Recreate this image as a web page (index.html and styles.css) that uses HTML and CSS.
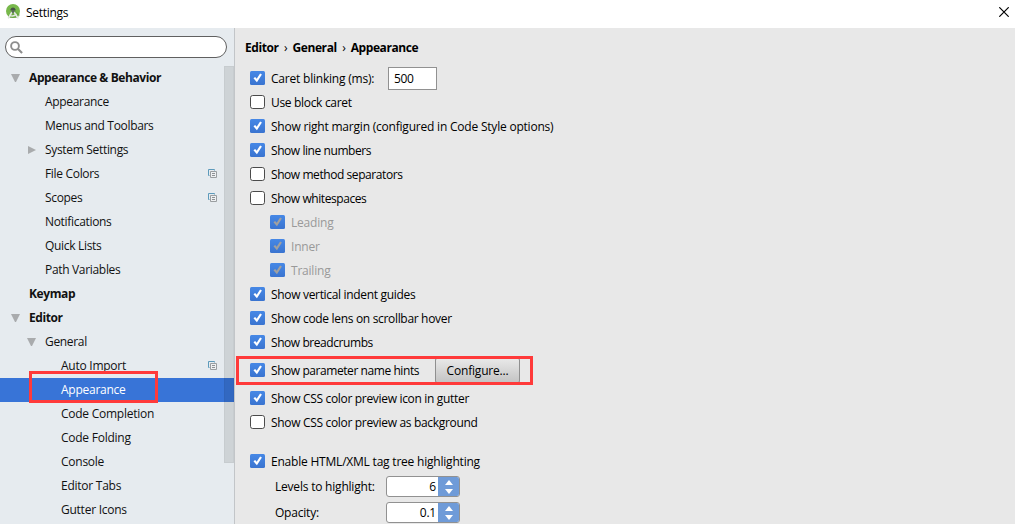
FILE: index.html
```html
<!DOCTYPE html>
<html lang="en">
<head>
    <meta charset="UTF-8">
    <meta name="viewport" content="width=device-width, initial-scale=1.0">
    <title>Settings</title>
    <link rel="stylesheet" href="styles.css">
</head>
<body>
    <!-- shared icons -->
    <svg class="defs" width="0" height="0">
        <linearGradient id="blue" x1="0" y1="0" x2="0" y2="1">
            <stop offset="0" stop-color="#4688e6"/>
            <stop offset="1" stop-color="#3a74d0"/>
        </linearGradient>
        <symbol id="copy" viewBox="0 0 9 9">
            <path d="M1.5 6.5h-1v-6h6v1" fill="none" stroke="#5d9abb"/>
            <path d="M2.5 2.5h6v6h-6z" fill="#eef0f2" stroke="#9a9ea1"/>
            <path d="M4 4.5h3M4 6.5h3" stroke="#8d9194"/>
        </symbol>
        <symbol id="on" viewBox="0 0 15 14">
            <rect width="15" height="14" rx="1.5" fill="url(#blue)"/>
            <path d="M4.3 6.6l2.5 2.9 4.2-6.5" fill="none" stroke="currentColor" stroke-width="2.2"/>
        </symbol>
        <symbol id="off" viewBox="0 0 15 14">
            <rect x=".5" y=".5" width="14" height="13" rx="2.2" fill="#fff" stroke="#4b4b4b"/>
        </symbol>
    </svg>

    <div class="titlebar">
        <svg class="logo" width="15" height="16" viewBox="0 0 15 16">
            <circle cx="7" cy="7" r="7" fill="#78b84b"/>
            <path d="M7 5l7 6-3 3H3L2 12z" fill="#609b3c" opacity=".6"/>
            <path d="M4.5 5.5a2.6 2.6 0 0 1 5 0v1h-5z" fill="#455247"/>
            <path d="M6 8L2.2 14.5M8 8l4.3 6.5" stroke="#e4e9e2" stroke-width="1.6"/>
            <path d="M3.5 11q3.5 2.5 7-1" fill="none" stroke="#e4e9e2" stroke-width="1.3"/>
            <circle cx="7" cy="7.6" r="1.4" fill="#59665a"/>
        </svg>
        <span class="title">Settings</span>
        <svg class="close" width="10" height="10" viewBox="0 0 10 10">
            <path d="M.3.3l9.4 9.4M9.7.3L.3 9.7" stroke="#000" stroke-width="1.2"/>
        </svg>
    </div>

    <div class="window">
        <div class="sidebar">
            <div class="search">
                <svg width="13" height="13" viewBox="0 0 13 13">
                    <circle cx="5" cy="5" r="3.9" fill="none" stroke="#8d8d8d" stroke-width="1.9"/>
                    <path d="M7.8 7.8l4.3 4.3" stroke="#8d8d8d" stroke-width="2.1"/>
                </svg>
            </div>
            <div class="tree">
                <div class="node top"><i class="arrow down"></i><span>Appearance &amp; Behavior</span></div>
                <div class="node second"><span>Appearance</span></div>
                <div class="node second"><span>Menus and Toolbars</span></div>
                <div class="node second"><i class="arrow right"></i><span>System Settings</span></div>
                <div class="node second"><span>File Colors</span><svg class="copy" width="9" height="9"><use href="#copy"/></svg></div>
                <div class="node second"><span>Scopes</span><svg class="copy" width="9" height="9"><use href="#copy"/></svg></div>
                <div class="node second"><span>Notifications</span></div>
                <div class="node second"><span>Quick Lists</span></div>
                <div class="node second"><span>Path Variables</span></div>
                <div class="node top"><span>Keymap</span></div>
                <div class="node top"><i class="arrow down"></i><span>Editor</span></div>
                <div class="node second"><i class="arrow down"></i><span>General</span></div>
                <div class="node third"><span>Auto Import</span><svg class="copy" width="9" height="9"><use href="#copy"/></svg></div>
                <div class="node third selected"><span>Appearance</span><div class="mark mark-tree"></div></div>
                <div class="node third"><span>Code Completion</span></div>
                <div class="node third"><span>Code Folding</span></div>
                <div class="node third"><span>Console</span></div>
                <div class="node third"><span>Editor Tabs</span></div>
                <div class="node third"><span>Gutter Icons</span></div>
                <div class="thumb"></div>
            </div>
        </div>

        <div class="content">
            <div class="breadcrumb"><b>Editor</b><span>›</span><b>General</b><span>›</span><b>Appearance</b></div>

            <div class="row loose"><svg class="check"><use href="#on"/></svg><span class="caret-label">Caret blinking (ms):</span><div class="field">500</div></div>
            <div class="row"><svg class="check"><use href="#off"/></svg><span>Use block caret</span></div>
            <div class="row loose"><svg class="check"><use href="#on"/></svg><span>Show right margin (configured in Code Style options)</span></div>
            <div class="row tight"><svg class="check"><use href="#on"/></svg><span>Show line numbers</span></div>
            <div class="row tight"><svg class="check"><use href="#off"/></svg><span>Show method separators</span></div>
            <div class="row tight"><svg class="check"><use href="#off"/></svg><span>Show whitespaces</span></div>
            <div class="row loose disabled"><svg class="check"><use href="#on"/></svg><span>Leading</span></div>
            <div class="row loose disabled"><svg class="check"><use href="#on"/></svg><span>Inner</span></div>
            <div class="row loose disabled"><svg class="check"><use href="#on"/></svg><span>Trailing</span></div>
            <div class="row"><svg class="check"><use href="#on"/></svg><span>Show vertical indent guides</span></div>
            <div class="row"><svg class="check"><use href="#on"/></svg><span>Show code lens on scrollbar hover</span></div>
            <div class="row tight"><svg class="check"><use href="#on"/></svg><span>Show breadcrumbs</span></div>
            <div class="row tight hints"><svg class="check"><use href="#on"/></svg><span class="hints-label">Show parameter name hints</span><div class="button">Configure...</div><div class="mark mark-hints"></div></div>
            <div class="row"><svg class="check"><use href="#on"/></svg><span>Show CSS color preview icon in gutter</span></div>
            <div class="row"><svg class="check"><use href="#off"/></svg><span>Show CSS color preview as background</span></div>

            <div class="row loose tags"><svg class="check"><use href="#on"/></svg><span>Enable HTML/XML tag tree highlighting</span></div>
            <div class="row loose spin-row">
                <span>Levels to highlight:</span>
                <div class="spinner"><div class="value">6</div><div class="steps"><i class="up"></i><i class="dn"></i></div></div>
            </div>
            <div class="row loose spin-row">
                <span>Opacity:</span>
                <div class="spinner"><div class="value">0.1</div><div class="steps"><i class="up"></i><i class="dn"></i></div></div>
            </div>
        </div>
    </div>
</body>
</html>
```
FILE: styles.css
```css
* {
    margin: 0;
    padding: 0;
    box-sizing: border-box;
}

body {
    width: 1015px;
    height: 524px;
    overflow: hidden;
    background: #fff;
    color: #111;
    font-family: 'Open Sans', 'Noto Sans', sans-serif;
    font-size: 12px;
    line-height: 16px;
    letter-spacing: -0.2px;
    white-space: nowrap;
}

svg {
    display: block;
    flex: none;
}

.defs {
    position: absolute;
}

.titlebar {
    display: flex;
    height: 28px;
    padding: 4px 6px 0 6px;
}

.title {
    margin: 1px 0 0 5px;
    color: #000;
    letter-spacing: -0.3px;
}

.close {
    margin: 3px 0 0 auto;
}

.window {
    display: flex;
    height: 496px;
}

/* Left side */
.sidebar {
    width: 235px;
    background: #e6ebef;
    border-right: 1px solid #c2c5c8;
}

.search {
    width: 222px;
    height: 22px;
    margin: 8px 0 8px 5px;
    padding: 4px;
    background: #fff;
    border: 1px solid #606060;
    border-radius: 11px;
}

.tree {
    position: relative;
}

.node {
    position: relative;
    display: flex;
    align-items: center;
    height: 24px;
    padding-right: 17px;
}

.top {
    padding-left: 29px;
    font-weight: bold;
    letter-spacing: -0.4px;
}

.second {
    padding-left: 45px;
    letter-spacing: -0.32px;
}

.third {
    padding-left: 61px;
    letter-spacing: -0.25px;
}

.selected {
    background: #3874d7;
    color: #fff;
}

.copy {
    margin-left: auto;
    margin-bottom: 1px;
}

.arrow {
    width: 9px;
    margin-left: -18px;
    margin-right: 9px;
}

.down {
    border: 4.5px solid transparent;
    border-top: 8px solid #a9abad;
    border-bottom: 0;
}

.right {
    width: 8px;
    margin-left: -17px;
    border: 4.5px solid transparent;
    border-left: 8px solid #a9abad;
    border-right: 0;
}

.thumb {
    position: absolute;
    top: 0;
    right: 0;
    width: 10px;
    height: 397px;
    background: rgba(0, 0, 0, 0.1);
    border: 1px solid rgba(0, 0, 0, 0.03);
}

/* Red frames */
.mark {
    position: absolute;
    z-index: 2;
    border: 3px solid #ff3a3a;
}

.mark-tree {
    left: 29px;
    top: -7px;
    width: 129px;
    height: 32px;
}

.mark-hints {
    left: -14px;
    top: 2px;
    width: 297px;
    height: 29px;
}

/* Right side */
.content {
    flex: 1;
    padding-left: 15px;
    background: #e8e8e8;
    color: #000;
}

.breadcrumb {
    display: flex;
    height: 38px;
    margin-left: -5px;
    padding-top: 12px;
    letter-spacing: -0.42px;
}

.breadcrumb span {
    width: 14px;
    text-align: center;
}

.row {
    position: relative;
    display: flex;
    align-items: center;
    height: 24px;
    letter-spacing: -0.32px;
}

.row > span {
    padding-top: 2px;
}

.tight { letter-spacing: -0.43px; }
.loose { letter-spacing: -0.21px; }

.check {
    width: 15px;
    height: 14px;
    margin-right: 6px;
    color: #fff;
}

.disabled {
    padding-left: 20px;
    color: #999;
}

.disabled .check {
    color: #a0a0a0;
}

.caret-label {
    width: 117px;
}

.field {
    width: 49px;
    height: 23px;
    padding: 3px 5px;
    background: #fff;
    border: 1px solid #919191;
    letter-spacing: -0.4px;
}

.hints {
    height: 32px;
}

.hints-label {
    width: 164px;
}

.button {
    width: 85px;
    height: 25px;
    line-height: 24px;
    text-align: center;
    letter-spacing: -0.2px;
    background: linear-gradient(#e8e8e8, #c4c4c4);
    border: 1px solid #8f8f8f;
    border-radius: 2px;
}

.tags {
    margin-top: 15px;
}

.spin-row {
    height: 26px;
    padding-left: 25px;
}

.spin-row span {
    width: 111px;
}

.spinner {
    display: flex;
    width: 74px;
    height: 21px;
    background: #fff;
    border: 1px solid #919191;
    border-radius: 3px;
    overflow: hidden;
}

.value {
    flex: 1;
    padding: 2px 2px 0 0;
    text-align: right;
}

.steps {
    display: flex;
    flex-direction: column;
    align-items: center;
    gap: 4px;
    width: 21px;
    padding-top: 3px;
    background: #6f9bd8;
}

.up, .dn {
    border: 4px solid transparent;
}

.up { border-bottom: 5px solid #fff; border-top: 0; }
.dn { border-top: 5px solid #fff; border-bottom: 0; }
```
